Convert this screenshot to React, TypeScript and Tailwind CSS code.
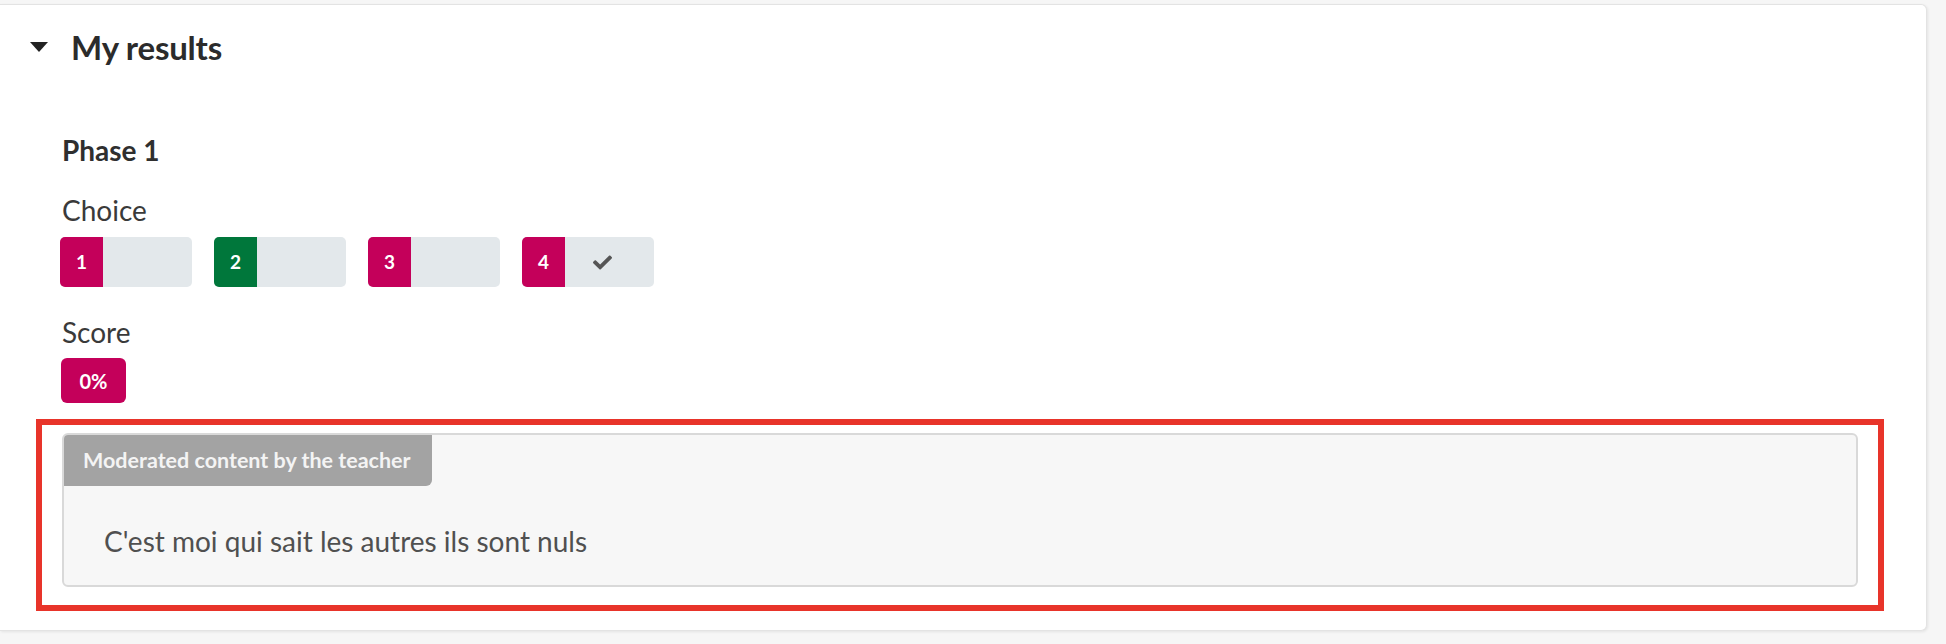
import React from "react";
import { FaCheck } from "react-icons/fa";

const chips = [
  { n: "1", color: "bg-[#c4005a]", check: false },
  { n: "2", color: "bg-[#00773b]", check: false },
  { n: "3", color: "bg-[#c4005a]", check: false },
  { n: "4", color: "bg-[#c4005a]", check: true },
];

export default function App() {
  return (
    <div
      className="min-h-screen w-full bg-[#f6f6f6] pt-[4px]"
      style={{ fontFamily: "Lato, 'Open Sans', sans-serif" }}
    >
      <div className="w-[1927px] h-[627px] bg-white rounded-r-[6px] border border-l-0 border-[#e3e3e3] shadow-[1px_1px_3px_rgba(0,0,0,0.08)]">
        {/* header */}
        <div className="flex items-center h-[40px] mt-[22px] pl-[30px]">
          <svg width="18" height="10" viewBox="0 0 18 10" className="mr-[23px]">
            <polygon points="0,0 18,0 9,10" fill="#222" />
          </svg>
          <span className="text-[33px] font-bold text-[#2b2b2b] leading-[40px] tracking-[-0.2px]">
            My results
          </span>
        </div>

        <div className="pl-[62px] pr-[42px]">
          <div className="mt-[66px] text-[28px] leading-[34px] font-bold text-[#2f2f2f]">
            Phase 1
          </div>
          <div className="mt-[26px] text-[28px] leading-[34px] text-[#3a3a3a]">
            Choice
          </div>
          <div className="mt-[10px] ml-[-2px] flex gap-[22px]">
            {chips.map((c) => (
              <div
                key={c.n}
                className="flex w-[132px] h-[50px] rounded-[5px] overflow-hidden bg-[#e3e8eb]"
              >
                <div
                  className={`${c.color} w-[43px] flex items-center justify-center text-white font-bold text-[19px]`}
                >
                  {c.n}
                </div>
                <div className="flex-1 flex items-center justify-center pr-[14px]">
                  {c.check && <FaCheck size={19} color="#555" />}
                </div>
              </div>
            ))}
          </div>
          <div className="mt-[28px] text-[28px] leading-[34px] text-[#3a3a3a]">
            Score
          </div>
          <div className="mt-[9px] ml-[-1px] w-[65px] h-[45px] rounded-[6px] bg-[#c4005a] flex items-center justify-center text-white font-bold text-[20px]">
            0%
          </div>

          <div className="mt-[16px] ml-[-26px] border-[6px] border-[#e8342a] pt-[8px] pb-[18px] px-[20px]">
            <div className="h-[154px] bg-[#f7f7f7] border-2 border-[#d9d9d9] rounded-[6px] overflow-hidden">
              <div className="inline-flex items-center h-[51px] bg-[#a3a3a3] rounded-br-[6px] pl-[19px] pr-[21px] text-[21.5px] font-bold text-[#f4f4f4]">
                Moderated content by the teacher
              </div>
              <div className="mt-[38px] pl-[40px] text-[28px] leading-[34px] text-[#505050]">
                C'est moi qui sait les autres ils sont nuls
              </div>
            </div>
          </div>
        </div>
      </div>
    </div>
  );
}
